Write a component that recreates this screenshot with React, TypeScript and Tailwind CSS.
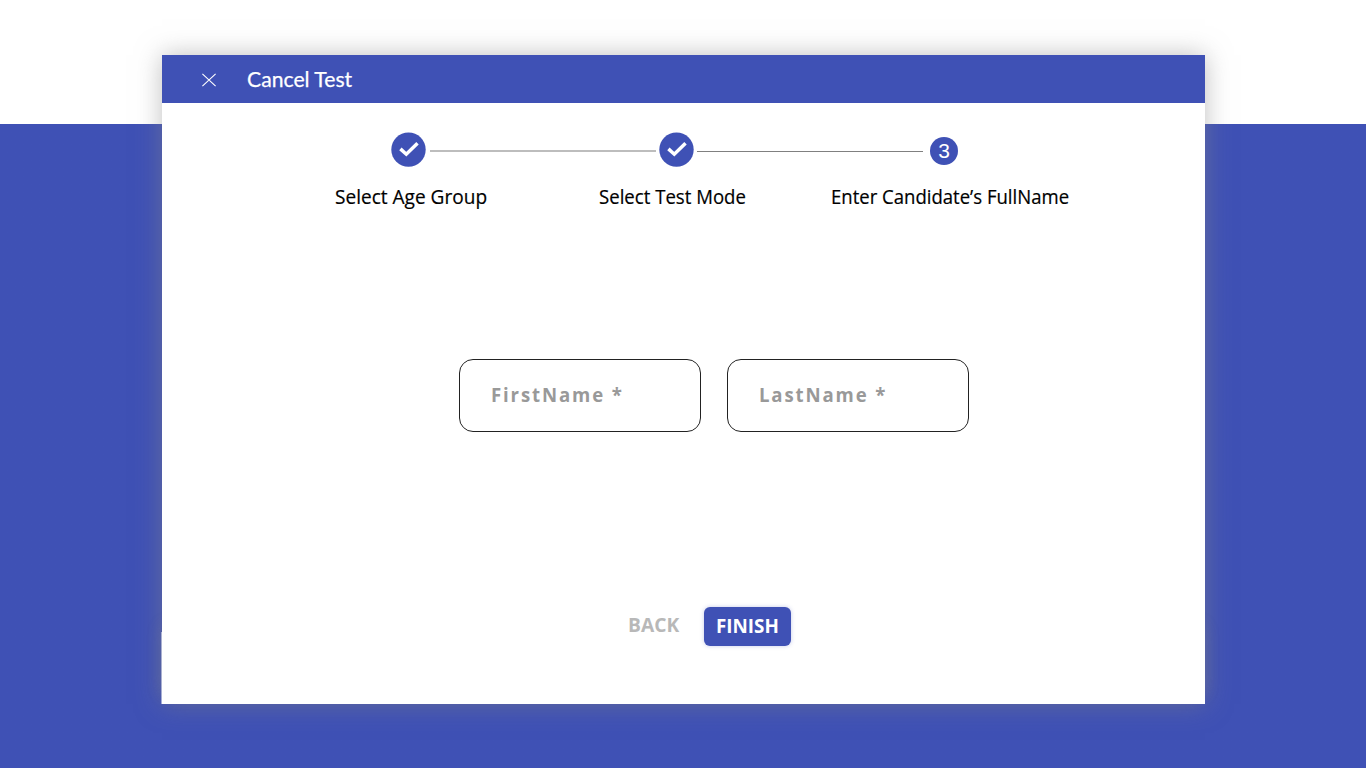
import React from "react";

function CheckStep() {
  return (
    <div className="flex h-[35px] w-[35px] shrink-0 items-center justify-center">
      <svg width="35" height="35" viewBox="0 0 35 35" fill="none" aria-hidden="true">
        <circle cx="17.5" cy="17.6" r="17.2" fill="#3f51b5" />
        <path d="M9.4 16.9 L15.3 22.2 L26.5 11.3" stroke="#fff" strokeWidth="3.5" />
      </svg>
    </div>
  );
}

function Field({ label, width }: { label: string; width: string }) {
  return (
    <div className="flex h-[73px] w-[242px] items-center rounded-[14px] border border-[#222] bg-white pb-[2px] pl-[31px]">
      <span className={`block origin-left text-[20px] leading-[28px] font-bold tracking-[2px] whitespace-nowrap text-[#999] ${width}`}>
        {label}
      </span>
    </div>
  );
}

export default function App() {
  return (
    <div className="h-[768px] w-[1366px] overflow-hidden bg-linear-to-b from-white from-[124px] to-[#3f51b5] to-[124px] pt-[55px] pl-[162px] font-['Open_Sans',sans-serif]">
      <div className="flex h-[649px] w-[1043px] flex-col bg-white shadow-[0_0_24px_rgba(132,132,132,0.52)]">
        <header className="flex h-[48px] shrink-0 items-center bg-[#3f51b5] pl-[40px] text-white">
          <svg width="14" height="14" viewBox="0 0 14 14" className="mt-[2px]" stroke="#fff" strokeWidth="1.1" aria-hidden="true">
            <path d="M0.4 0.8 L13.6 13.2 M13.6 0.8 L0.4 13.2" />
          </svg>
          <span className="ml-[31px] block origin-left scale-x-[0.962] font-['Lato',sans-serif] text-[22px] leading-[26px] whitespace-nowrap [-webkit-text-stroke:0.25px_white]">
            Cancel Test
          </span>
        </header>

        <div className="flex h-[77px] shrink-0 items-start pt-[29px] pl-[229px]">
          <CheckStep />
          <div className="mt-[18px] ml-[4px] h-[2px] w-[226px] bg-[#bdbdbd]" />
          <div className="ml-[3px]">
            <CheckStep />
          </div>
          <div className="mt-[19px] ml-[3px] h-px w-[226px] bg-[#808080]" />
          <div className="mt-[5px] ml-[7px] flex h-[28px] w-[28px] items-center justify-center rounded-full bg-[#3f51b5] font-['Liberation_Sans',sans-serif] text-[21px] leading-[28px] text-white">
            3
          </div>
        </div>

        <div className="mt-[3px] flex h-[28px] shrink-0 pl-[173px] text-[20px] leading-[28px] whitespace-nowrap text-black [-webkit-text-stroke:0.2px_black]">
          <div className="w-[264px]">
            <span className="block w-max origin-left scale-x-[0.953]">Select Age Group</span>
          </div>
          <div className="w-[232px]">
            <span className="block w-max origin-left scale-x-[0.93]">Select Test Mode</span>
          </div>
          <span className="block w-max origin-left scale-x-[0.927]">Enter Candidate’s FullName</span>
        </div>

        <div className="mt-[148px] flex shrink-0 gap-[26px] pl-[297px]">
          <Field label="FirstName *" width="scale-x-[0.93]" />
          <Field label="LastName *" width="scale-x-[0.93]" />
        </div>

        <div className="relative z-10 mt-auto flex h-[25px] shrink-0 items-start bg-white pl-[466px]">
          <span className="mt-[4px] w-[76px] text-[20px] leading-[28px] font-bold whitespace-nowrap text-[#b8b8b8]">
            <span className="block w-max origin-left scale-x-[0.96]">BACK</span>
          </span>
          <button className="flex h-[39px] w-[87px] shrink-0 justify-center rounded-[6px] bg-[#3f51b5] text-[20px] leading-[38px] font-bold whitespace-nowrap text-white shadow-[0_0_4px_rgba(63,81,181,0.3)]">
            <span className="block w-max scale-x-[0.94]">FINISH</span>
          </button>
        </div>
        <div className="-ml-px h-[72px] shrink-0 border-l border-white/50 bg-white bg-clip-padding shadow-[0_-8px_16px_-3px_rgba(132,132,132,0.3)]" />
      </div>
    </div>
  );
}
